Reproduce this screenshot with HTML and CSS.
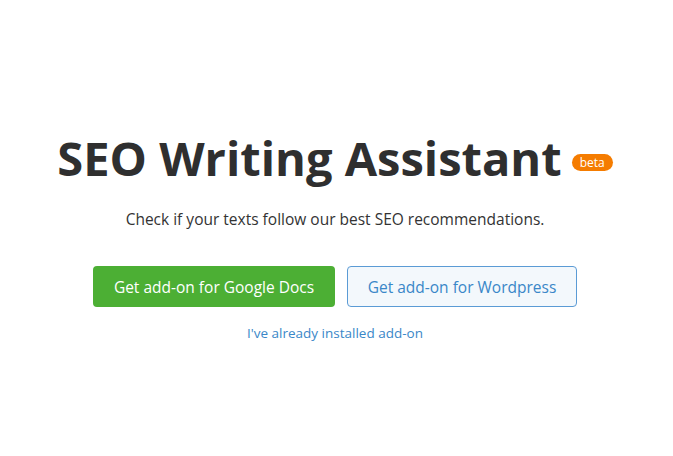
FILE: index.html
```html
<!DOCTYPE html>
<html lang="en">
<head>
<meta charset="utf-8" />
<title>SEO Writing Assistant</title>
<link rel="stylesheet" href="styles.css">
</head>
<body>
<div class="intro">
  <h1 class="intro-title">SEO Writing Assistant <span class="badge">beta</span></h1>
  <p class="intro-text">Check if your texts follow our best SEO recommendations.</p>
  <div class="actions">
    <a class="btn btn-green" href="#">Get add-on for Google Docs</a>
    <a class="btn btn-outline" href="#">Get add-on for Wordpress</a>
  </div>
  <a class="installed" href="#">I've already installed add-on</a>
</div>
</body>
</html>
```

FILE: styles.css
```css
body {
  margin:0; background:#fff; color:#333;
  font-family: "Open Sans", "Noto Sans", sans-serif;
}
.intro {
  display:flex; flex-direction:column; align-items:center;
  padding:130px 3px 0 0;
}
.intro-title {
  margin:0; font-size:47px; line-height:56px; font-weight:700; color:#2f2f2f;
  display:flex; align-items:center; gap:10px;
}
.badge {
  display:inline-block; background:#f57c00; color:#fff;
  font-size:12px; font-weight:400; line-height:17px;
  padding:0 8px; border-radius:9px; margin-top:8px;
}
.intro-text {
  margin:23px 0 0; font-size:15.5px; line-height:20px; color:#333;
}
.actions {
  display:flex; gap:12px; margin-top:37px;
}
.btn {
  display:flex; align-items:center; justify-content:center;
  height:41px; box-sizing:border-box; white-space:nowrap;
  font-size:15.5px; text-decoration:none; border-radius:4px;
}
.btn-green {
  background:#4caf34; color:#fff; width:242px;
}
.btn-outline {
  background:#f3f8fc; color:#3a87c8; border:1px solid #5b9bd5; width:230px;
}
.installed {
  margin-top:17px; font-size:13.5px; color:#3a87c8; text-decoration:none;
}
```
